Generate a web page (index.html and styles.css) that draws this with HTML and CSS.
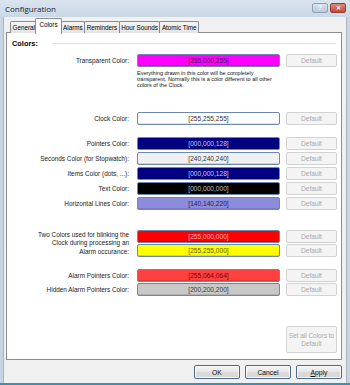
FILE: index.html
```html
<!DOCTYPE html>
<html>
<head>
<meta charset="utf-8">
<link rel="stylesheet" href="styles.css">
</head>
<body>
<div class="window">
  <div class="titlebar">
    <span class="title">Configuration</span>
    <div class="tb-buttons">
      <span class="tb-btn tb-help">?</span>
      <span class="tb-btn tb-close">✕</span>
    </div>
  </div>
  <div class="client">
    <div class="tabs">
      <span class="tab">General</span>
      <span class="tab active">Colors</span>
      <span class="tab">Alarms</span>
      <span class="tab">Reminders</span>
      <span class="tab">Hour Sounds</span>
      <span class="tab">Atomic Time</span>
    </div>
    <div class="panel">
      <div class="section-head"><span class="section-title">Colors:</span><span class="rule"></span></div>

      <div class="grid g-transparent">
        <span class="label">Transparent Color:</span>
        <span class="swatch c-magenta">[255,000,255]</span>
        <span class="btn-default">Default</span>
        <span class="desc">Everything drawn in this color will be completely transparent. Normally this is a color different to all other colors of the Clock.</span>
      </div>

      <div class="grid g-clock">
        <span class="label">Clock Color:</span>
        <span class="swatch c-white">[255,255,255]</span>
        <span class="btn-default">Default</span>
      </div>

      <div class="grid g-five">
        <span class="label">Pointers Color:</span>
        <span class="swatch c-navy">[000,000,128]</span>
        <span class="btn-default">Default</span>
        <span class="label">Seconds Color (for Stopwatch):</span>
        <span class="swatch c-light">[240,240,240]</span>
        <span class="btn-default">Default</span>
        <span class="label">Items Color (dots, ...):</span>
        <span class="swatch c-navy">[000,000,128]</span>
        <span class="btn-default">Default</span>
        <span class="label">Text Color:</span>
        <span class="swatch c-black">[000,000,000]</span>
        <span class="btn-default">Default</span>
        <span class="label">Horizontal Lines Color:</span>
        <span class="swatch c-lavender">[140,140,220]</span>
        <span class="btn-default">Default</span>
      </div>

      <div class="grid g-blink">
        <span class="label label-multi">Two Colors used for blinking the<br>Clock during processing an<br>Alarm occurance:</span>
        <span class="swatch c-red">[255,000,000]</span>
        <span class="btn-default">Default</span>
        <span class="swatch c-yellow">[255,255,000]</span>
        <span class="btn-default">Default</span>
      </div>

      <div class="grid g-alarm">
        <span class="label">Alarm Pointers Color:</span>
        <span class="swatch c-alarm">[255,064,064]</span>
        <span class="btn-default">Default</span>
        <span class="label">Hidden Alarm Pointers Color:</span>
        <span class="swatch c-gray">[200,200,200]</span>
        <span class="btn-default">Default</span>
      </div>

      <div class="grid g-setall">
        <span class="btn-default btn-setall">Set all Colors to<br>Default</span>
      </div>
    </div>
    <div class="footer">
      <span class="btn">OK</span>
      <span class="btn">Cancel</span>
      <span class="btn"><u>A</u>pply</span>
    </div>
  </div>
</div>
</body>
</html>
```
FILE: styles.css
```css
html, body {
  margin: 0;
  padding: 0;
  background: #ffffff;
}

.window {
  width: 350px;
  height: 385px;
  box-sizing: border-box;
  background: linear-gradient(#d9e4ef, #c8d6e4 20px, #c5d3e2);
  border-bottom: 2px solid #3c8fb0;
  font-family: "Liberation Sans", Arial, sans-serif;
  color: #000;
  display: flex;
  flex-direction: column;
  overflow: hidden;
}

.titlebar {
  height: 17px;
  display: flex;
  align-items: center;
  justify-content: space-between;
  padding: 0 4px 0 5px;
}

.title {
  font-family: "Open Sans", "Liberation Sans", sans-serif;
  font-size: 8px;
  color: #1b1b1b;
  margin-top: -1px;
}

.tb-buttons {
  display: flex;
  gap: 2px;
  margin-top: -2px;
}

.tb-btn {
  width: 16px;
  height: 10px;
  border-radius: 2px;
  display: flex;
  align-items: center;
  justify-content: center;
  font-size: 7px;
  font-weight: bold;
}

.tb-help {
  background: linear-gradient(#d7e2ed, #b9c9da);
  border: 1px solid #8ea2b8;
  color: #f4f8fb;
  box-sizing: border-box;
}

.tb-close {
  background: linear-gradient(#dd8a80, #c24a3c);
  border: 1px solid #8f3f37;
  color: #ffffff;
  box-sizing: border-box;
  font-size: 6px;
}

.client {
  flex: 1;
  margin: 0 3px;
  background: #f0f0f0;
  border-left: 1px solid #a8b4c0;
  border-right: 1px solid #a8b4c0;
  display: flex;
  flex-direction: column;
  padding: 1px 4px 0 2px;
}

.tabs {
  display: flex;
  align-items: flex-end;
  height: 15px;
  padding-left: 4px;
  position: relative;
  z-index: 1;
  margin-bottom: -1px;
}

.tab {
  height: 12px;
  box-sizing: border-box;
  border: 1px solid #898c95;
  border-bottom: none;
  border-radius: 2px 2px 0 0;
  background: linear-gradient(#f4f4f4, #e4e4e4);
  font-size: 6.3px;
  padding: 0 1.5px;
  display: flex;
  align-items: center;
  margin-right: -1px;
  color: #000;
}

.tab.active {
  background: #ffffff;
  margin: 0 -1px 0 -1px;
  padding: 2px 3px 0 3px;
  position: relative;
  z-index: 2;
  height: 16px;
  margin-bottom: -1px;
  align-items: flex-start;
}

.panel {
  background: #ffffff;
  border: 1px solid #898c95;
  height: 328px;
  box-sizing: border-box;
  display: flex;
  flex-direction: column;
}

.section-head {
  display: flex;
  align-items: center;
  margin: 5px 5px 0 5px;
  height: 10px;
}

.section-title {
  font-weight: bold;
  font-size: 7.4px;
}

.rule {
  flex: 1;
  height: 0;
  border-top: 1px solid #d5dfe5;
  margin-left: 14px;
}

.grid {
  display: grid;
  grid-template-columns: 124px 143px 51px;
  column-gap: 6px;
  align-items: center;
}

.label {
  font-size: 6.4px;
  text-align: right;
  padding-right: 2px;
  color: #1a1a1a;
  white-space: nowrap;
}

.label-multi {
  grid-row: 1 / 3;
  line-height: 8.3px;
  align-self: start;
  padding-top: 1px;
}

.swatch {
  height: 13px;
  box-sizing: border-box;
  border: 1px solid #6b89ad;
  border-radius: 2px;
  font-size: 6.6px;
  display: flex;
  align-items: center;
  justify-content: center;
  box-shadow: inset 0 -1px 0 rgba(0,0,0,0.12);
}

.btn-default {
  height: 13px;
  box-sizing: border-box;
  border: 1px solid #d2d2d2;
  border-radius: 2px;
  background: #f4f4f4;
  color: #a9a9a9;
  font-size: 6.6px;
  display: flex;
  align-items: center;
  justify-content: center;
}

.desc {
  grid-column: 2 / 4;
  font-size: 5.5px;
  line-height: 6px;
  padding-top: 3px;
  padding-right: 55px;
  color: #111;
}

.g-transparent { margin-top: 6px; }
.g-clock { margin-top: 24px; }
.g-five { margin-top: 12px; row-gap: 2px; }
.g-blink { margin-top: 20px; row-gap: 1px; }
.g-alarm { margin-top: 12px; row-gap: 1px; }
.g-setall { margin-top: 30px; }

.btn-setall {
  grid-column: 3;
  height: 27px;
  text-align: center;
  line-height: 8px;
  padding: 0;
  font-size: 6.4px;
}

.c-magenta { background: #ff00ff; color: #4a104a; }
.c-white { background: #ffffff; color: #333333; }
.c-navy { background: #000080; color: #c8c8ff; }
.c-light { background: #f0f0f0; color: #333333; }
.c-black { background: #000000; color: #c0c0c0; }
.c-lavender { background: #8c8cdc; color: #1e1e5a; }
.c-red { background: #ff0000; color: #ffb4b4; }
.c-yellow { background: #ffff00; color: #5a5a00; }
.c-alarm { background: #ff4040; color: #7a0000; }
.c-gray { background: #c8c8c8; color: #3a3a3a; }

.footer {
  display: flex;
  justify-content: flex-end;
  gap: 5px;
  margin-top: 5px;
}

.btn {
  width: 46px;
  height: 14px;
  box-sizing: border-box;
  border: 1px solid #4e6a88;
  border-radius: 2px;
  background: linear-gradient(#f4f4f4, #e6e6e6 50%, #dcdcdc 51%, #d6d6d6);
  box-shadow: inset 0 0 0 1px #fbfbfb;
  font-size: 6.8px;
  display: flex;
  align-items: center;
  justify-content: center;
  color: #111;
}
```
